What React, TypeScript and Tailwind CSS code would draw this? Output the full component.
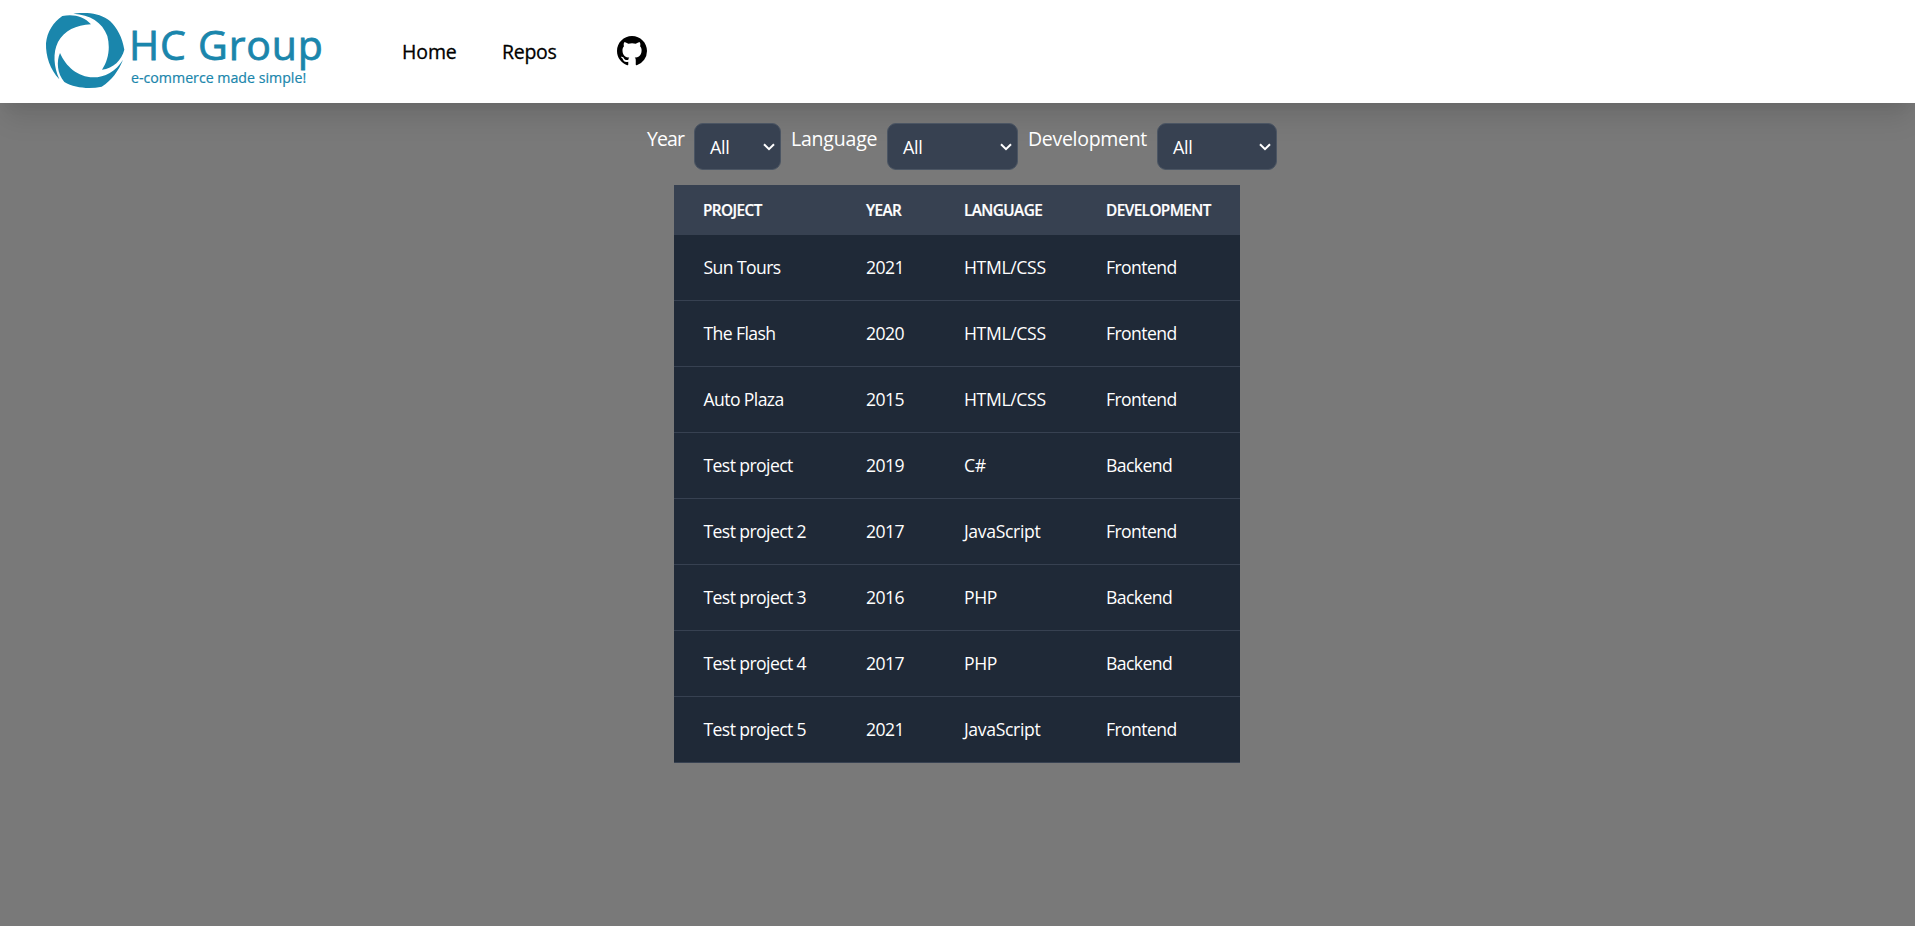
import React from "react";

type Project = { name: string; year: number; language: string; development: string };

const projects: Project[] = [
  { name: "Sun Tours", year: 2021, language: "HTML/CSS", development: "Frontend" },
  { name: "The Flash", year: 2020, language: "HTML/CSS", development: "Frontend" },
  { name: "Auto Plaza", year: 2015, language: "HTML/CSS", development: "Frontend" },
  { name: "Test project", year: 2019, language: "C#", development: "Backend" },
  { name: "Test project 2", year: 2017, language: "JavaScript", development: "Frontend" },
  { name: "Test project 3", year: 2016, language: "PHP", development: "Backend" },
  { name: "Test project 4", year: 2017, language: "PHP", development: "Backend" },
  { name: "Test project 5", year: 2021, language: "JavaScript", development: "Frontend" },
];

function Logo() {
  return (
    <a href="#" className="flex h-[77px] w-[284px] shrink-0 text-[#1a86ac]">
      <svg viewBox="45 39 243 231" className="h-[77px] w-[81px] shrink-0" fill="currentColor">
        <path d="M88 238C60 208 47 170 48 130C51 96 70 66 97 48C128 41 162 48 183 73C138 75 103 92 84 126C68 158 71 200 88 238Z" />
        <path d="M130 41C170 35 212 40 240 63C262 85 277 112 283 149C275 180 250 205 216 209C236 180 241 142 232 108C217 66 180 44 130 41Z" />
        <path d="M90 159C79 184 81 220 103 246C134 264 178 268 215 260C246 240 266 212 279 179C258 214 224 232 190 232C143 231 108 200 90 159Z" />
      </svg>
      <div className="flex flex-col whitespace-nowrap pl-[3px] pt-[7px]">
        <span className="text-[41px] leading-[49px] tracking-[0.8px] [-webkit-text-stroke:0.8px_currentColor]">HC Group</span>
        <span className="pl-[2px] text-[14.2px] leading-[18px] [-webkit-text-stroke:0.2px_currentColor]">e-commerce made simple!</span>
      </div>
    </a>
  );
}

function GithubIcon() {
  return (
    <svg viewBox="0 0 16 16" className="h-[30px] w-[30px]" fill="black">
      <path d="M8 0C3.58 0 0 3.58 0 8c0 3.54 2.29 6.53 5.47 7.59.4.07.55-.17.55-.38 0-.19-.01-.82-.01-1.49-2.01.37-2.53-.49-2.69-.94-.09-.23-.48-.94-.82-1.13-.28-.15-.68-.52-.01-.53.63-.01 1.08.58 1.23.82.72 1.21 1.87.87 2.33.66.07-.52.28-.87.51-1.07-1.78-.2-3.64-.89-3.64-3.95 0-.87.31-1.59.82-2.15-.08-.2-.36-1.02.08-2.12 0 0 .67-.21 2.2.82.64-.18 1.32-.27 2-.27s1.36.09 2 .27c1.53-1.04 2.2-.82 2.2-.82.44 1.1.16 1.92.08 2.12.51.56.82 1.27.82 2.15 0 3.07-1.87 3.75-3.65 3.95.29.25.54.73.54 1.48 0 1.07-.01 1.93-.01 2.2 0 .21.15.46.55.38A8.01 8.01 0 0 0 16 8c0-4.42-3.58-8-8-8Z" />
    </svg>
  );
}

function Filter({ label, labelClass, selectClass }: { label: string; labelClass: string; selectClass: string }) {
  return (
    <div className="flex">
      <span className={"shrink-0 whitespace-nowrap pt-px text-[19.5px] leading-[30px] " + labelClass}>{label}</span>
      <button
        className={
          "flex h-[47px] shrink-0 items-center justify-between rounded-[9px] border border-[#4b5563] bg-[#374151] pl-[15px] pr-[5px] text-[18px] tracking-[-0.4px] " +
          selectClass
        }
      >
        <span className="pt-[2px]">All</span>
        <svg viewBox="0 0 12 8" className="h-[8px] w-[12px]" fill="none" stroke="white" strokeWidth="2">
          <path d="M1 1.2L6 6.2L11 1.2" />
        </svg>
      </button>
    </div>
  );
}

export default function App() {
  return (
    <div className="flex h-[926px] flex-col overflow-hidden bg-[#797979] font-['Open_Sans','Noto_Sans',sans-serif] text-white">
      <header className="flex h-[103px] shrink-0 items-start bg-white pl-[45px] pt-[13px] text-black shadow-[0_20px_25px_-5px_rgba(0,0,0,0.1),0_10px_10px_-5px_rgba(0,0,0,0.04)]">
        <Logo />
        <nav className="flex h-[77px] items-center pl-[73px] text-[19.5px] [-webkit-text-stroke:0.3px_currentColor]">
          <a href="#" className="w-[100px] pt-px tracking-[-0.1px]">Home</a>
          <a href="#" className="w-[115px] pt-px tracking-[-0.3px]">Repos</a>
          <a href="#" aria-label="GitHub" className="-mt-[2px]"><GithubIcon /></a>
        </nav>
      </header>
      <main className="flex flex-col">
        <div className="flex pl-[647px] pt-[20px]">
          <Filter label="Year" labelClass="w-[47px] tracking-[-0.9px]" selectClass="w-[87px]" />
          <Filter label="Language" labelClass="w-[106px] pl-[10px] tracking-[-0.2px]" selectClass="w-[131px]" />
          <Filter label="Development" labelClass="w-[139px] pl-[10px] tracking-[-0.3px]" selectClass="w-[120px]" />
        </div>
        <table className="ml-[674px] mt-[15px] w-[566px] table-fixed border-collapse text-left">
          <colgroup>
            <col className="w-[163px]" />
            <col className="w-[98px]" />
            <col className="w-[142px]" />
            <col className="w-[163px]" />
          </colgroup>
          <thead>
            <tr className="h-[50px] bg-[#374151] text-[15.3px] tracking-[-0.55px]">
              {["PROJECT", "YEAR", "LANGUAGE", "DEVELOPMENT"].map((h) => (
                <th key={h} className="whitespace-nowrap pl-[29px] font-semibold [-webkit-text-stroke:0.2px_currentColor]">{h}</th>
              ))}
            </tr>
          </thead>
          <tbody>
            {projects.map((p) => (
              <tr key={p.name} className="h-[66px] bg-[#1f2937] text-[17.6px] tracking-[-0.6px] shadow-[inset_0_-1px_0_#374151]">
                <td className="whitespace-nowrap pl-[29.5px] pb-px">{p.name}</td>
                <td className="pl-[29px] pb-px">{p.year}</td>
                <td className="pl-[29px] pb-px tracking-[-0.35px]">{p.language}</td>
                <td className="pl-[29px] pb-px">{p.development}</td>
              </tr>
            ))}
          </tbody>
        </table>
      </main>
    </div>
  );
}
